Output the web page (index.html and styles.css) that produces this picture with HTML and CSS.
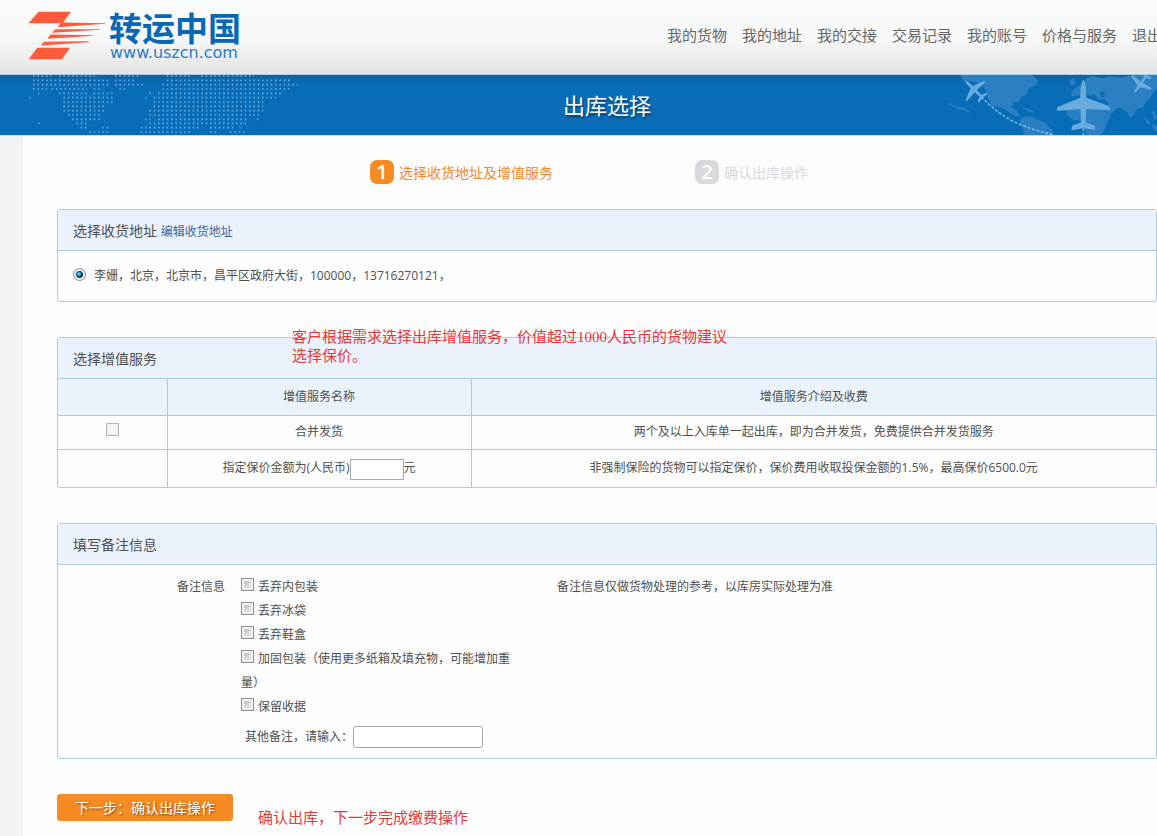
FILE: index.html
```html
<!DOCTYPE html>
<html lang="zh-CN">
<head>
<meta charset="utf-8">
<title>出库选择 - 转运中国</title>
<link rel="stylesheet" href="styles.css">
</head>
<body>
<header class="site-header">
  <a class="logo" href="#">
    <svg class="logo-mark" viewBox="84 34 234 146" aria-hidden="true">
      <g fill="#ff5a3c">
        <path d="M116 36H213L188 70H85Z"/>
        <path d="M112 144H210L186 178H86Z"/>
        <path d="M184 68L316 70V72L173 82Z"/>
        <path d="M166 88L300 88V90L156 99Z"/>
        <path d="M152 104L280 106V108L142 117Z"/>
        <path d="M132 126L266 124V127L122 137Z"/>
      </g>
    </svg>
    <span class="logo-text">
      <span class="logo-name">转运中国</span>
      <span class="logo-url">www.uszcn.com</span>
    </span>
  </a>
  <nav class="nav">
    <a href="#">我的货物</a><a href="#">我的地址</a><a href="#">我的交接</a><a href="#">交易记录</a><a href="#">我的账号</a><a href="#">价格与服务</a><a href="#">退出</a>
  </nav>
</header>

<div class="banner">
  <svg class="banner-dots" viewBox="0 225 900 180" aria-hidden="true">
    <path fill="none" stroke="#5fa8de" stroke-width="5" stroke-dasharray="5 8" d="M99 228H155M177 228H285M345 228H416M500 228H572M604 228H762
      M99 241H328M345 241H406M500 241H872
      M99 254H328M345 254H402M411 254H430M487 254H892
      M99 267H142M155 267H262M281 267H308M358 267H378M487 267H868
      M115 280H119M177 280H264M281 280H338M448 280H462M474 280H842
      M88 293H92M190 293H341M436 293H440M461 293H802M811 293H828
      M190 306H338M461 306H790M190 319H312M461 319H790M190 332H312M448 332H790
      M203 345H302M448 345H777M216 358H300M435 358H452M474 358H746M771 358H775
      M115 370H119M229 370H264M448 370H738M242 383H262M307 383H326M422 383H598M630 383H704M718 383H722
      M268 396H286M294 396H326M422 396H572M630 396H650M690 396H742"/>
  </svg>
  <h1 class="banner-title">出库选择</h1>
  <svg class="banner-map" viewBox="0 30 711 180" aria-hidden="true">
    <g fill="#2a80c2">
      <path d="M120 30H336L355 48L346 62L326 70L320 88L304 96L296 112L280 110L276 128L292 138L300 156L286 152L266 140L240 126L216 122L202 98L196 72L176 54L150 48L134 52Z"/>
      <path d="M304 158L330 154L352 164L372 170L384 184L398 194V210H314L308 188L300 172Z"/>
      <path d="M86 112L100 120L112 122L110 128L90 120ZM108 126L126 126L148 138L150 144L130 136L112 134ZM302 124L330 134L346 142L326 140Z"/>
      <path d="M450 44L462 38L468 52L458 62L448 58ZM456 78L470 66L484 58L500 40L520 34L548 40L570 34L600 38L640 30H711V70L700 82L690 98L676 112L668 128L650 132L640 150L630 158L622 142L606 130L590 128L578 144L564 150L554 128L566 116L556 104L534 102L524 88L508 92L494 82L474 92L454 94Z"/>
      <path d="M450 112L470 104L500 106L526 112L550 130L562 148L574 152L560 174L554 192L544 210H500L494 190L490 168L460 164L440 150L438 132Z"/>
      <path d="M670 154L684 166L692 180L682 178ZM694 134L706 144L711 160L704 166ZM696 176L711 184V198L700 192Z"/>
    </g>
    <path fill="#0a6cb6" d="M538 82L552 78L556 92L546 100ZM514 86L530 96L518 98Z"/>
    <g fill="none" stroke="#8cc0e6" stroke-width="4" stroke-dasharray="9 5">
      <path d="M184 96C230 140 270 180 400 209"/>
      <path d="M490 190V210"/>
    </g>
    <g fill="#68acdd">
      <path id="plane" d="M490 44C496 52 499 62 499 98L568 124L570 136L499 132L497 172L524 182L526 194L490 190L454 196L456 182L483 172L481 132L410 138L412 126L481 98C481 62 484 52 490 44Z"/>
      <use href="#plane" transform="translate(163 74) rotate(-45) scale(.5) translate(-490 -120)"/>
      <use href="#plane" transform="translate(662 56) rotate(215) scale(.45) translate(-490 -120)"/>
    </g>
  </svg>
</div>

<main class="page">
  <ol class="steps">
    <li class="step step-active"><span class="step-num">1</span>选择收货地址及增值服务</li>
    <li class="step"><span class="step-num">2</span>确认出库操作</li>
  </ol>

  <form class="form">
    <section class="panel">
      <h2 class="panel-title">选择收货地址 <a class="panel-link" href="#">编辑收货地址</a></h2>
      <div class="address">
        <input class="radio" type="radio" id="addr" name="addr" checked>
        <label for="addr">李姗，北京，北京市，昌平区政府大街，100000，13716270121，</label>
      </div>
    </section>

    <section class="panel">
      <h2 class="panel-title">选择增值服务</h2>
      <p class="note note-service">客户根据需求选择出库增值服务，价值超过1000人民币的货物建议选择保价。</p>
      <table class="services">
        <thead>
          <tr><th class="col-pick"></th><th class="col-name">增值服务名称</th><th>增值服务介绍及收费</th></tr>
        </thead>
        <tbody>
          <tr>
            <td><input class="check check-plain" type="checkbox" id="merge"></td>
            <td><label for="merge">合并发货</label></td>
            <td>两个及以上入库单一起出库，即为合并发货，免费提供合并发货服务</td>
          </tr>
          <tr class="row-insure">
            <td></td>
            <td><label for="insure">指定保价金额为(人民币)</label><input class="amount" type="text" id="insure">元</td>
            <td>非强制保险的货物可以指定保价，保价费用收取投保金额的1.5%，最高保价6500.0元</td>
          </tr>
        </tbody>
      </table>
    </section>

    <section class="panel">
      <h2 class="panel-title">填写备注信息</h2>
      <div class="remarks">
        <span class="remarks-label">备注信息</span>
        <div>
          <div><input class="check" type="checkbox" id="r1"><label for="r1">丢弃内包装</label></div>
          <div><input class="check" type="checkbox" id="r2"><label for="r2">丢弃冰袋</label></div>
          <div><input class="check" type="checkbox" id="r3"><label for="r3">丢弃鞋盒</label></div>
          <div><input class="check" type="checkbox" id="r4"><label for="r4">加固包装（使用更多纸箱及填充物，可能增加重量）</label></div>
          <div><input class="check" type="checkbox" id="r5"><label for="r5">保留收据</label></div>
          <div class="other"><label for="other">其他备注，请输入：</label><input class="other-input" type="text" id="other"></div>
        </div>
        <span>备注信息仅做货物处理的参考，以库房实际处理为准</span>
      </div>
    </section>

    <div class="actions">
      <button class="submit" type="button">下一步：确认出库操作</button>
      <p class="note note-submit">确认出库，下一步完成缴费操作</p>
    </div>
  </form>
</main>
</body>
</html>
```

FILE: styles.css
```css
* {
  box-sizing: border-box;
}

body {
  margin: 0;
  overflow-x: hidden;
  background: #f3f2f5;
  color: #505050;
  font: 12px/24px "Open Sans", "Noto Sans CJK SC", sans-serif;
}

a {
  color: inherit;
  text-decoration: none;
}

input,
button {
  margin: 0;
  font: inherit;
}

/* Header */
.site-header {
  display: flex;
  justify-content: space-between;
  height: 75px;
  overflow: hidden;
  border-bottom: 1px solid #a9cfea;
  background: linear-gradient(#fafbfb 0%, #f7f8f8 50%, #e4e4e5 100%);
}

.logo {
  display: flex;
  padding: 11px 0 0 28px;
}

.logo-mark {
  width: 78px;
  height: 49px;
}

.logo-text {
  display: flex;
  flex-direction: column;
  padding-left: 3px;
}

.logo-name {
  color: #0868b4;
  font-size: 33px;
  font-weight: 700;
  line-height: 36px;
}

.logo-url {
  padding-left: 1px;
  color: #2a7cc4;
  font: 16px/12px "DejaVu Sans", sans-serif;
}

.nav {
  display: flex;
  flex: none;
  gap: 15px;
  margin-right: -5px;
  padding-top: 23px;
  color: #666;
  font-size: 15px;
  white-space: nowrap;
}

/* Banner */
.banner {
  position: relative;
  height: 61px;
  padding-left: 57px;
  border-bottom: 1px solid #c9dcec;
  background: linear-gradient(#0a62a4 0, #086db7 12px);
  overflow: hidden;
}

.banner-title {
  position: relative;
  margin: 0;
  color: #fff;
  font-size: 22px;
  font-weight: 400;
  line-height: 60px;
  text-align: center;
  text-shadow: 1px 2px 2px #04406f;
}

.banner-dots {
  position: absolute;
  top: 0;
  left: 0;
  width: 300px;
  height: 60px;
}

.banner-map {
  position: absolute;
  top: 0;
  right: 0;
  width: 237px;
  height: 60px;
}

/* Page */
.page {
  margin-left: 23px;
  padding: 24px 0 15px 34px;
  background: #fdfdfd;
}

.steps {
  display: grid;
  grid-template-columns: 325px 325px;
  margin: 0 0 23px;
  padding: 0 0 0 313px;
  list-style: none;
}

.step {
  display: flex;
  gap: 5px;
  color: #d9d8dc;
  font-size: 14px;
  line-height: 26px;
}

.step-num {
  width: 24px;
  height: 24px;
  border-radius: 7px;
  background: #d9d8dc;
  color: #fff;
  font-size: 20px;
  font-weight: 600;
  line-height: 24px;
  text-align: center;
}

.step-active {
  color: #f08a2c;
}

.step-active .step-num {
  background: #f68b23;
}

.form {
  display: flex;
  flex-direction: column;
  gap: 35px;
}

.panel {
  position: relative;
  border: 1px solid #abcbe3;
  border-radius: 3px;
}

.panel-title {
  height: 41px;
  margin: 0;
  padding: 0 15px;
  border-bottom: 1px solid #abcbe3;
  background: #ebf2fb;
  font-size: 14px;
  font-weight: 400;
  line-height: 41px;
}

.panel-link {
  color: #3b6799;
  font-size: 12px;
  line-height: 24px;
}

.address {
  display: flex;
  gap: 8px;
  padding: 13px 15px;
}

.radio {
  appearance: none;
  width: 13px;
  height: 13px;
  margin-top: 4px;
  border: 1px solid #8e8f8f;
  border-radius: 50%;
  background: #eef0f2;
}

.radio:checked {
  background: radial-gradient(circle at 5px 5px, #8fe0f5 0, #1c86ad 2px, transparent 3px), radial-gradient(circle at center, #0d2f45 0, #0d2f45 3px, #e8ecef 4px);
}

/* Service table */
.services {
  width: 100%;
  border-collapse: collapse;
  table-layout: fixed;
  text-align: center;
}

.services th,
.services td {
  height: 34px;
  padding: 0;
  border: 1px solid #abcbe3;
  font-weight: 400;
}

.services th {
  height: 36px;
  border-top: 0;
  background: #eaf3fb;
}

.services .row-insure td {
  height: 38px;
  border-bottom: 0;
}

.services th:first-child,
.services td:first-child {
  border-left: 0;
}

.services th:last-child,
.services td:last-child {
  border-right: 0;
}

.services .col-pick {
  width: 109px;
}

.services .col-name {
  width: 304px;
}

.amount {
  width: 54px;
  height: 21px;
  border: 1px solid #a5a9ad;
  background: #fff;
  vertical-align: middle;
}

.check {
  appearance: none;
  width: 13px;
  height: 13px;
  margin-right: 4px;
  border: 1px solid #8e8f8f;
  background: linear-gradient(135deg, #b4b8bd, #f5f5f5);
  box-shadow: inset 0 0 0 2px #f2f2f2;
  vertical-align: 0;
}

.check-plain {
  margin-right: 0;
  border-color: #b4b4b4;
  background: #f6f6f6;
}

/* Remarks */
.remarks {
  display: grid;
  grid-template-columns: 167px 272px 1fr;
  padding: 10px 0 9px;
}

.remarks > div {
  margin-left: 16px;
  margin-right: -16px;
}

.remarks > span:last-child {
  padding-left: 60px;
}

.remarks-label {
  text-align: right;
}

.other {
  display: flex;
  align-items: center;
  margin-top: 6px;
  padding-left: 4px;
}

.other-input {
  width: 130px;
  height: 22px;
  border: 1px solid #a5a9ad;
  border-radius: 3px;
  background: #fff;
}

/* Actions */
.actions {
  position: relative;
}

.submit {
  display: block;
  width: 176px;
  height: 27px;
  padding: 0;
  border: 0;
  border-radius: 3px;
  background: #f68b23;
  color: #fff;
  font-size: 14px;
  text-shadow: 1px 1px 2px #7a4a1a;
}

/* Red guide notes laid over the form */
.note {
  position: absolute;
  margin: 0;
  color: #e03a3a;
  font: 15px/19px "Liberation Serif", "Noto Sans CJK SC", serif;
}

.note-service {
  top: -10px;
  left: 234px;
  width: 440px;
}

.note-submit {
  top: 15px;
  left: 201px;
}
```
